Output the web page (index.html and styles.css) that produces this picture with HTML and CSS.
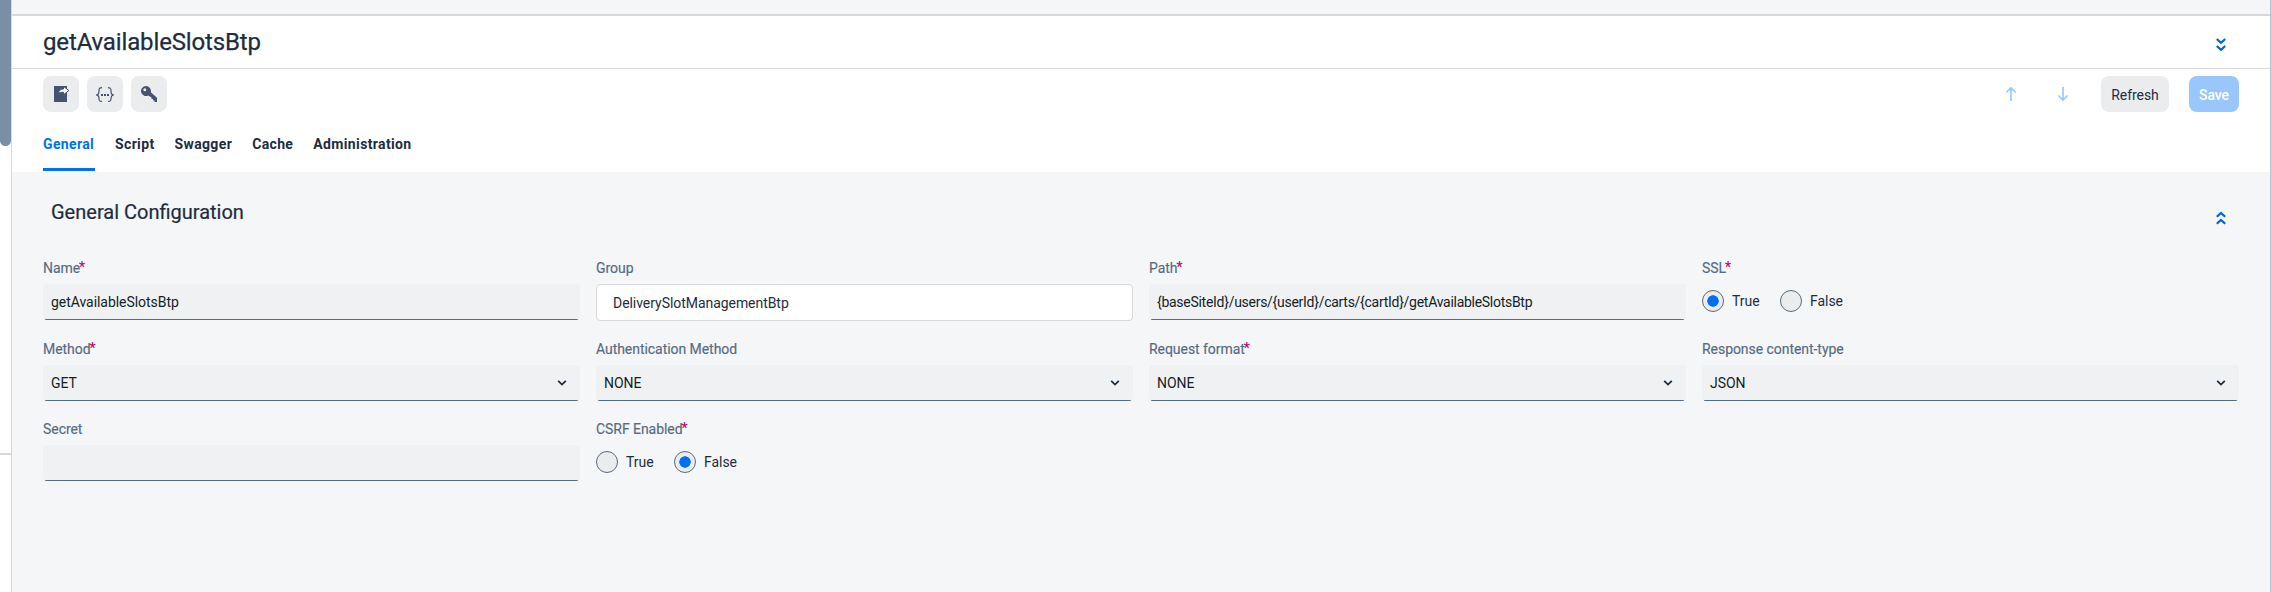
FILE: index.html
```html
<!DOCTYPE html>
<html lang="en">
<head>
<meta charset="utf-8">
<title>getAvailableSlotsBtp</title>
<link rel="stylesheet" href="styles.css">
</head>
<body>
<div class="app">
  <aside class="side">
    <div class="thumb"></div>
    <div class="side-line"></div>
  </aside>
  <main class="main">
    <div class="strip"></div>
    <header class="title-row">
      <h1 class="title">getAvailableSlotsBtp</h1>
      <svg class="dbl" width="10" height="14" viewBox="0 0 10 14"><path d="M.8 1 5 4.8 9.2 1M.8 8 5 11.8 9.2 8"/></svg>
    </header>
    <div class="toolbar">
      <button class="btn icon"><svg width="18" height="16" viewBox="0 0 18 16"><path fill="#475170" d="M2 0h13v16H2z"/><path fill="#fff" stroke="#475170" stroke-width="1" d="M6.500 7.200C7 4.400 8.500 3 11.500 3V.4L16.800 4.500 11.500 8.800V6.200C9.500 6.200 8 6.500 6.500 7.200z"/></svg></button>
      <button class="btn icon"><svg width="18" height="16" viewBox="0 0 18 16" fill="none" stroke="#475170" stroke-width="1.200"><path d="M6 1.600C3.300 1.600 3 2.600 3 5c0 2.500-.2 4-3 4 2.800 0 3 1.500 3 4 0 1.800.3 2.400 3 2.400M12 1.600c2.700 0 3 1 3 3.400 0 2.500.2 4 3 4-2.800 0-3 1.500-3 4 0 1.800-.3 2.400-3 2.400M0 9h2.500M15.500 9H18"/><path fill="#475170" stroke="none" d="M5 8h2v2H5zM8 8h2v2H8zM11 8h2v2h-2z"/></svg></button>
      <button class="btn icon"><svg width="16" height="16" viewBox="0 0 16 16"><path fill="#475170" fill-rule="evenodd" d="M5 0a5 5 0 0 1 4.800 6.200L16 11.800V16h-2.500v-1.500H12V13h-1.500v-1.500L7.200 9.500A5 5 0 1 1 5 0zM3.800 2.200a1.500 1.500 0 1 0 0 3 1.500 1.500 0 0 0 0-3z"/></svg></button>
      <span class="space"></span>
      <svg class="arrow" width="12" height="14" viewBox="0 0 12 14"><path d="M6 14V1M1.300 5.500 6 .9l4.700 4.600"/></svg>
      <svg class="arrow" width="12" height="14" viewBox="0 0 12 14"><path d="M6 0v13M1.300 8.500 6 13.100l4.700-4.600"/></svg>
      <button class="btn refresh">Refresh</button>
      <button class="btn save">Save</button>
    </div>
    <nav class="tabs">
      <a class="tab active">General</a><a class="tab">Script</a><a class="tab">Swagger</a><a class="tab">Cache</a><a class="tab">Administration</a>
    </nav>
    <section class="content">
      <div class="section-head">
        <h2 class="section-title">General Configuration</h2>
        <svg class="dbl" width="10" height="14" viewBox="0 0 10 14"><path d="M.8 5.800 5 2l4.200 3.800M.8 12.800 5 9l4.200 3.800"/></svg>
      </div>
      <div class="grid">
        <div class="cell"><div class="label">Name<sup class="req">*</sup></div><div class="field">getAvailableSlotsBtp</div></div>
        <div class="cell"><div class="label">Group</div><div class="field outlined">DeliverySlotManagementBtp</div></div>
        <div class="cell"><div class="label">Path<sup class="req">*</sup></div><div class="field path">{baseSiteId}/users/{userId}/carts/{cartId}/getAvailableSlotsBtp</div></div>
        <div class="cell"><div class="label">SSL<sup class="req">*</sup></div><div class="radios"><span class="radio on"></span><span class="option">True</span><span class="radio"></span><span class="option">False</span></div></div>

        <div class="cell"><div class="label">Method<sup class="req">*</sup></div><div class="field">GET<svg class="chev" width="10" height="8" viewBox="0 0 10 8"><path d="M1.200 1.800 5 5.600l3.800-3.800"/></svg></div></div>
        <div class="cell"><div class="label">Authentication Method</div><div class="field">NONE<svg class="chev" width="10" height="8" viewBox="0 0 10 8"><path d="M1.200 1.800 5 5.600l3.800-3.800"/></svg></div></div>
        <div class="cell"><div class="label">Request format<sup class="req">*</sup></div><div class="field">NONE<svg class="chev" width="10" height="8" viewBox="0 0 10 8"><path d="M1.200 1.800 5 5.600l3.800-3.800"/></svg></div></div>
        <div class="cell"><div class="label">Response content-type</div><div class="field">JSON<svg class="chev" width="10" height="8" viewBox="0 0 10 8"><path d="M1.200 1.800 5 5.600l3.800-3.800"/></svg></div></div>

        <div class="cell"><div class="label">Secret</div><div class="field"></div></div>
        <div class="cell"><div class="label">CSRF Enabled<sup class="req">*</sup></div><div class="radios"><span class="radio"></span><span class="option">True</span><span class="radio on"></span><span class="option">False</span></div></div>
      </div>
    </section>
  </main>
</div>
</body>
</html>
```
FILE: styles.css
```css
* { box-sizing: border-box; }
body { margin: 0; font: 14px/20px Roboto, "Liberation Sans", sans-serif; color: #1d2d3e; letter-spacing: -0.05px; }
.app { display: flex; height: 592px; overflow: hidden; background: #f5f6f8; }
.side { width: 12px; background: #fff; border-right: 1px solid #d5d9df; display: flex; flex-direction: column; }
.thumb { height: 146px; background: #788fa6; border-radius: 0 0 5.5px 5.5px; }
.side-line { height: 2px; margin-top: 307px; background: #d9d9d9; }
.main { flex: 1; display: flex; flex-direction: column; border-right: 1px solid #b9c2cf; }
.strip { height: 16px; border-bottom: 2px solid #d9d9d9; }
.title-row { height: 53px; padding: 0 44px 0 31px; display: flex; align-items: center; justify-content: space-between; background: #fff; border-bottom: 1px solid #d9d9d9; }
.title { margin: 0; font-size: 24px; line-height: 28px; font-weight: 400; letter-spacing: -0.14px; -webkit-text-stroke: 0.25px; }
.dbl { fill: none; stroke: #0064d9; stroke-width: 2.2; margin-top: 5px; }
.toolbar { height: 51px; padding: 7px 31px 0; display: flex; align-items: flex-start; background: #fff; }
.btn { height: 36px; padding: 2px 0 0; border: 0; border-radius: 8px; background: #ebecee; color: #1d2d3e; font: inherit; letter-spacing: inherit; display: flex; align-items: center; justify-content: center; }
.icon { width: 36px; margin-right: 8px; padding: 0; }
.space { flex: 1; }
.arrow { margin: 11px 40px 0 0; fill: none; stroke: #99c6fb; stroke-width: 1.6; }
.arrow + .arrow { margin-right: 32px; }
.refresh { width: 68px; margin-right: 20px; }
.save { width: 50px; background: #99c6fb; color: #fff; font-weight: 500; }
.tabs { height: 52px; padding: 14px 31px 1px; display: flex; gap: 20px; background: #fff; font-weight: 700; letter-spacing: 0.36px; }
.tab { border-bottom: 3px solid transparent; }
.active { width: 52px; color: #0070f2; border-color: #0070f2; }
.content { flex: 1; padding: 0 31px; }
.section-head { height: 86px; padding: 26px 13px 0 8px; display: flex; justify-content: space-between; align-items: flex-start; }
.section-title { margin: 0; font-size: 20px; line-height: 28px; font-weight: 400; letter-spacing: 0; -webkit-text-stroke: 0.2px; }
.section-head .dbl { margin-top: 13px; }
.grid { display: grid; grid-template-columns: repeat(4, 1fr); gap: 18px 16px; }
.label { height: 20px; margin-bottom: 6px; color: #556b82; -webkit-text-stroke: 0.15px; }
.req { color: #ba066c; font-size: 14px; line-height: 0; vertical-align: 1px; margin-left: -1px; }
.field { height: 36px; padding: 0 13px 0 8px; border-radius: 4px; display: flex; align-items: center; justify-content: space-between; background: linear-gradient(#556b82, #556b82) center bottom / calc(100% - 4px) 1px no-repeat #eff1f2; color: #131e29; }
.path { letter-spacing: -0.28px; }
.outlined { height: 37px; padding-left: 16px; background: #fff; border: 1px solid #d9d9d9; color: #1d2d3e; }
.chev { fill: none; stroke: #1d2d3e; stroke-width: 1.8; }
.radios { height: 34px; display: flex; align-items: center; }
.radio { width: 22px; height: 22px; border: 1px solid #556b82; border-radius: 50%; background: #ebecee; margin-right: 8px; }
.on { background: radial-gradient(circle, #0070f2 5.4px, #ebecee 6px); }
.option { width: 48px; }
```
